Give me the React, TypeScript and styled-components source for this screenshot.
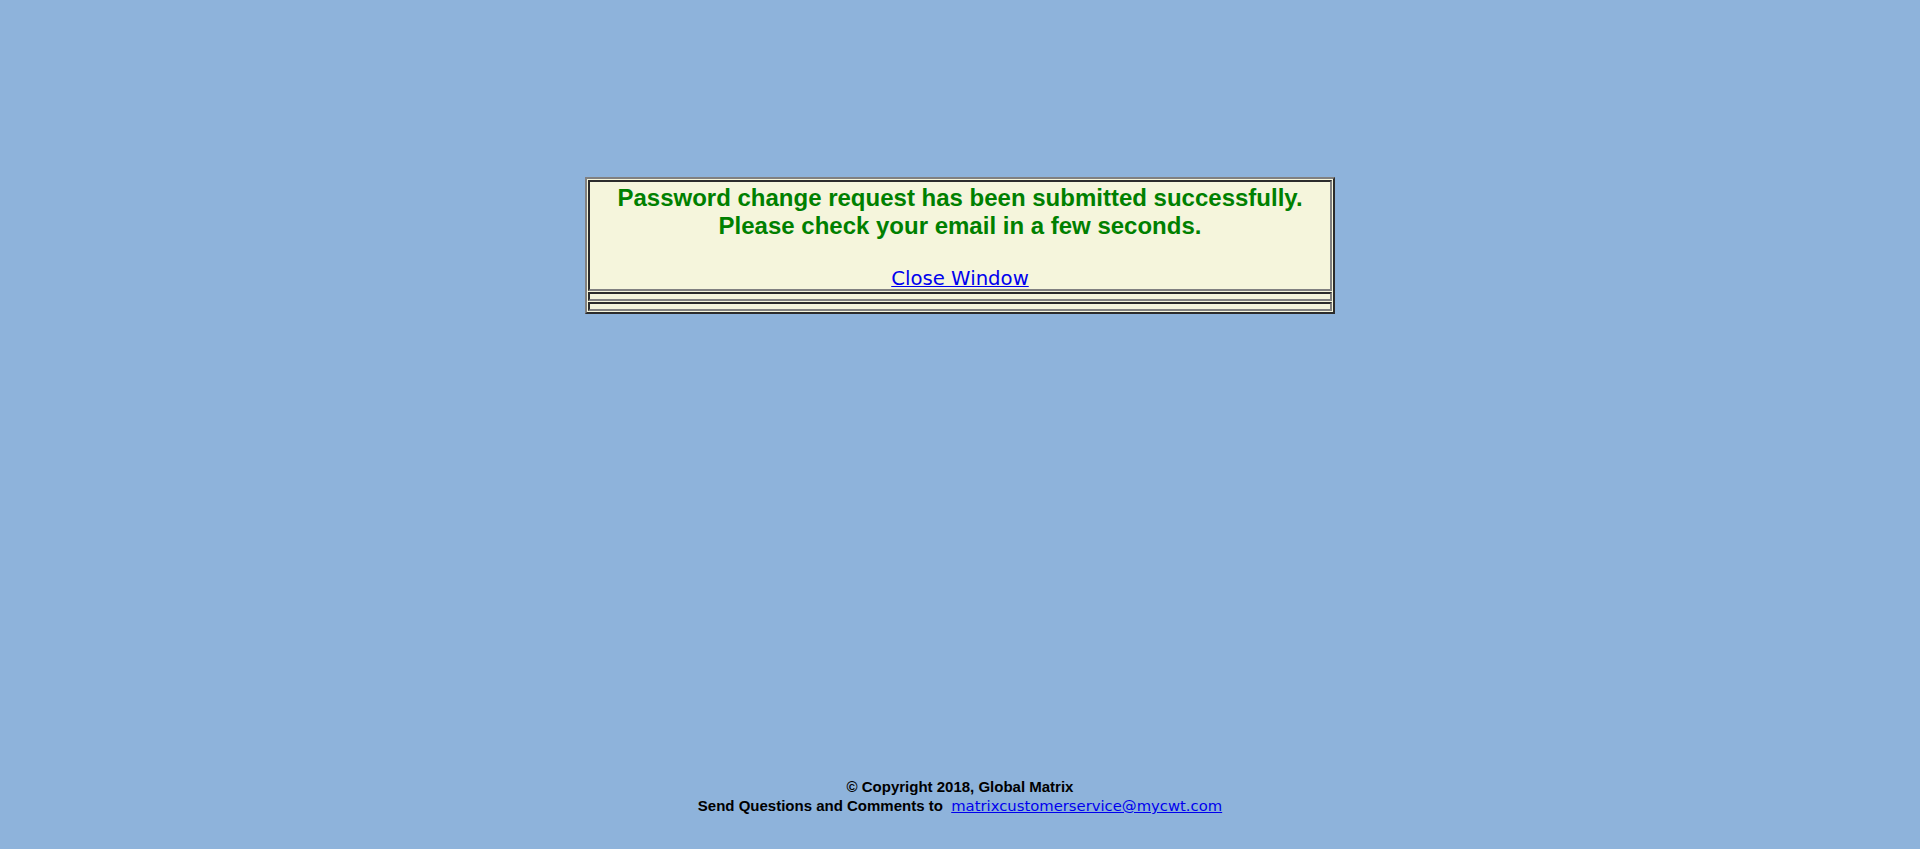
import React from "react";
import styled, { createGlobalStyle } from "styled-components";

const GlobalStyle = createGlobalStyle`
  html, body {
    margin: 0;
    padding: 0;
    background: #8eb3db;
    font-family: "Liberation Sans", Arial, sans-serif;
  }
`;

const Page = styled.div`
  min-height: 100vh;
  box-sizing: border-box;
  display: flex;
  flex-direction: column;
  align-items: center;
  padding-top: 177px;
`;

const Frame = styled.div`
  width: 750px;
  box-sizing: border-box;
  border: 2px solid;
  border-color: #808080 #2c2c2c #2c2c2c #808080;
  background: #f5f5dc;
  padding: 1px;
  display: flex;
  flex-direction: column;
  gap: 1px;
`;

const Cell = styled.div<{ $height: number }>`
  box-sizing: border-box;
  height: ${(p) => p.$height}px;
  border: 2px solid;
  border-color: #2c2c2c #808080 #808080 #2c2c2c;
`;

const MessageCell = styled(Cell)`
  padding-top: 2px;
  text-align: center;
`;

const Message = styled.p`
  margin: 0;
  font-family: "Liberation Sans", Arial, sans-serif;
  font-weight: bold;
  font-size: 24px;
  line-height: 27.6px;
  color: #008000;
`;

const LinkLine = styled.div`
  margin-top: 30px;
  line-height: 20px;
`;

const CloseLink = styled.a`
  font-family: "DejaVu Sans", Verdana, sans-serif;
  font-size: 19.7px;
  color: #0000ee;
  text-decoration: underline;
  cursor: pointer;
`;

const Footer = styled.footer`
  margin-top: auto;
  padding-bottom: 34px;
  text-align: center;
  font-family: "Liberation Sans", Arial, sans-serif;
  font-weight: bold;
  font-size: 15px;
  line-height: 19px;
  color: #000;
`;

const FooterLine = styled.div``;

const MailLink = styled.a`
  font-family: "DejaVu Sans", Verdana, sans-serif;
  font-weight: normal;
  font-size: 14.8px;
  color: #0000ee;
  text-decoration: underline;
`;

export default function App() {
  return (
    <>
      <GlobalStyle />
      <Page>
        <Frame>
          <MessageCell $height={111}>
            <Message>
              Password change request has been submitted successfully.
              <br />
              Please check your email in a few seconds.
            </Message>
            <LinkLine>
              <CloseLink href="#" onClick={(e) => e.preventDefault()}>
                Close Window
              </CloseLink>
            </LinkLine>
          </MessageCell>
          <Cell $height={9} />
          <Cell $height={9} />
        </Frame>
        <Footer>
          <FooterLine>© Copyright 2018, Global Matrix</FooterLine>
          <FooterLine>
            Send Questions and Comments to{"\u00a0 "}
            <MailLink href="mailto:matrixcustomerservice@mycwt.com">
              matrixcustomerservice@mycwt.com
            </MailLink>
          </FooterLine>
        </Footer>
      </Page>
    </>
  );
}
